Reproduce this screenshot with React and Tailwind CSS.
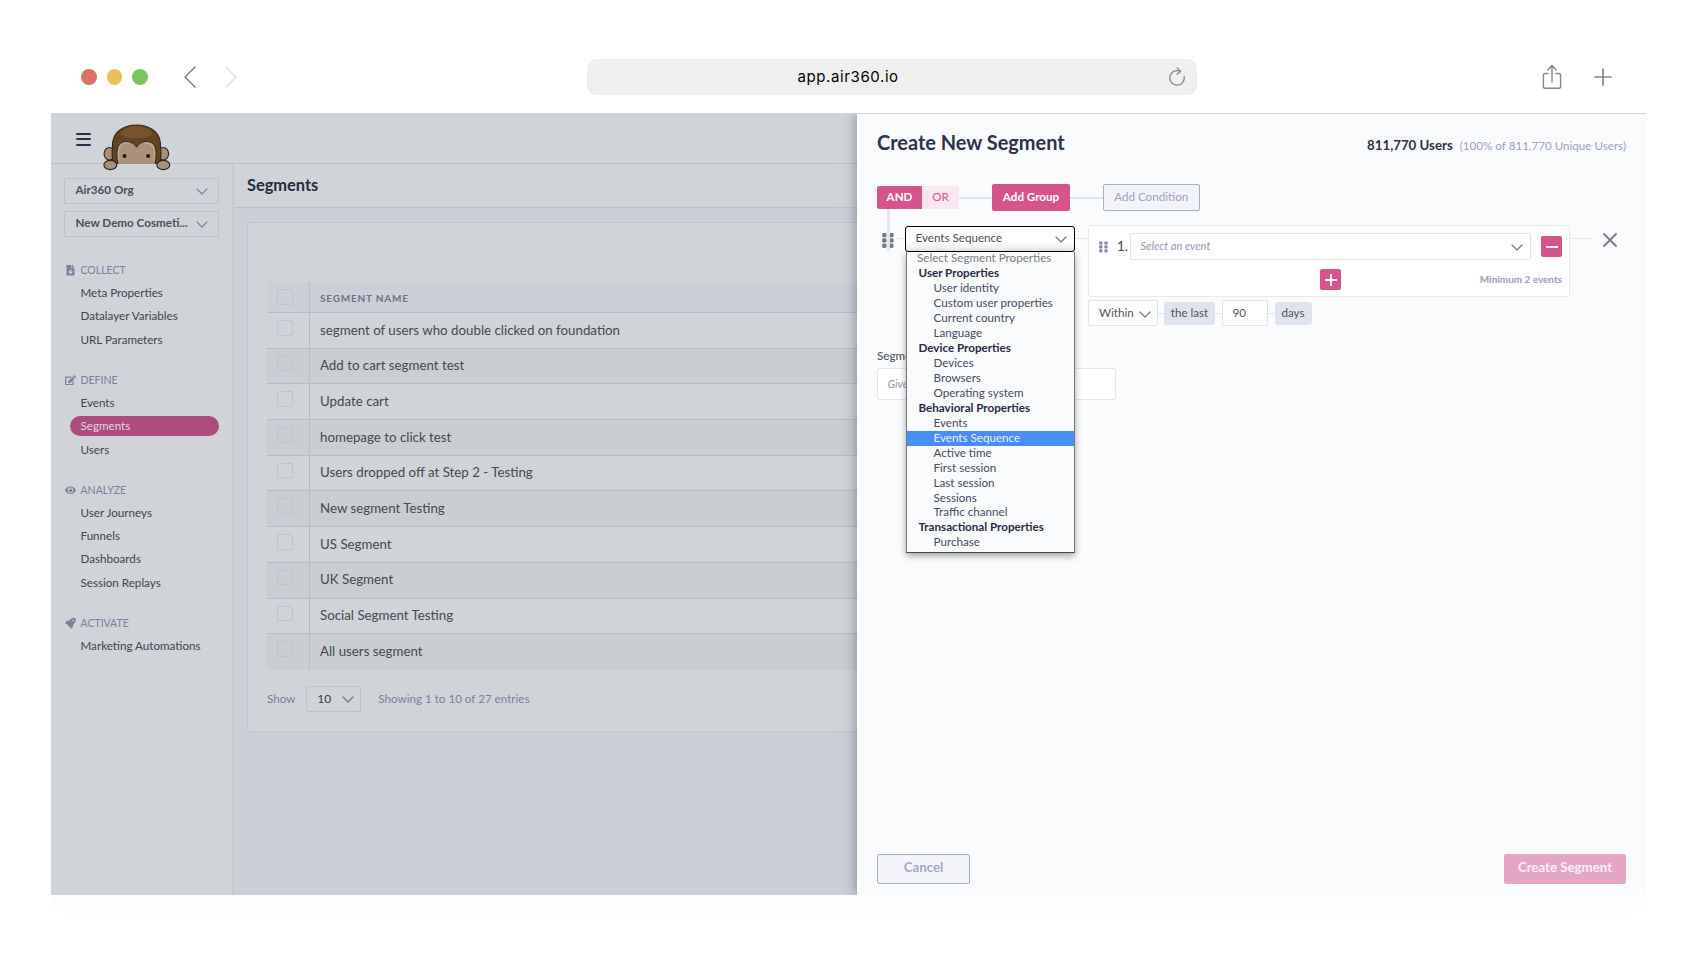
import React from "react";
import { FaFileDownload, FaEdit, FaEye, FaRocket } from "react-icons/fa";

const nav = [
  { title: "COLLECT", Icon: FaFileDownload, items: ["Meta Properties", "Datalayer Variables", "URL Parameters"] },
  { title: "DEFINE", Icon: FaEdit, items: ["Events", "Segments", "Users"] },
  { title: "ANALYZE", Icon: FaEye, items: ["User Journeys", "Funnels", "Dashboards", "Session Replays"] },
  { title: "ACTIVATE", Icon: FaRocket, items: ["Marketing Automations"] },
];

const segments = [
  "segment of users who double clicked on foundation",
  "Add to cart segment test",
  "Update cart",
  "homepage to click test",
  "Users dropped off at Step 2 - Testing",
  "New segment Testing",
  "US Segment",
  "UK Segment",
  "Social Segment Testing",
  "All users segment",
];

const groups = [
  { label: "User Properties", options: ["User identity", "Custom user properties", "Current country", "Language"] },
  { label: "Device Properties", options: ["Devices", "Browsers", "Operating system"] },
  {
    label: "Behavioral Properties",
    options: ["Events", "Events Sequence", "Active time", "First session", "Last session", "Sessions", "Traffic channel"],
  },
  { label: "Transactional Properties", options: ["Purchase"] },
];

function Chevron({ className }) {
  return (
    <svg viewBox="0 0 12 7" className={className} fill="none" stroke="currentColor" strokeWidth="1.2" strokeLinecap="round" strokeLinejoin="round">
      <path d="M1 1l5 5 5-5" />
    </svg>
  );
}

function Grip({ className }) {
  return (
    <svg viewBox="0 0 12 15" className={className} fill="currentColor">
      {[0, 5.3, 10.6].map((y) => (
        <g key={y}>
          <rect x="0.2" y={y} width="4.3" height="4.3" rx="1.3" />
          <rect x="7.2" y={y} width="4.3" height="4.3" rx="1.3" />
        </g>
      ))}
    </svg>
  );
}

function Monkey() {
  return (
    <svg viewBox="190 250 205 142" className="ml-[11.5px] mt-[9.5px] h-[47px] w-[68px] shrink-0" stroke="#2f2520" strokeWidth="3.5" strokeLinejoin="round">
      <ellipse cx="209" cy="340" rx="16" ry="19" fill="#a98f77" />
      <ellipse cx="372" cy="340" rx="16" ry="19" fill="#a98f77" />
      <path d="M219 371C217 350 217 325 219 305C223 273 252 253 291 253C330 253 359 273 363 305C365 325 365 350 363 371Z" fill="#65431f" stroke="none" />
      <path d="M242 278C256 262 272 257 291 257C310 257 326 262 341 278C330 290 312 293 291 293C270 293 252 290 242 278Z" fill="#78532f" stroke="none" />
      <path d="M235 371C230 350 230 330 236 316C246 297 277 297 291 320C305 297 336 297 346 316C352 330 352 350 347 371Z" fill="#ab9178" stroke="none" />
      <path d="M235 371C230 350 230 330 236 316C246 297 277 297 291 320C305 297 336 297 346 316C352 330 352 350 347 371" fill="none" strokeWidth="3" />
      <path d="M239 360C236 342 236 330 240 320C246 310 258 306 268 309M343 360C346 342 346 330 342 320C336 310 324 306 314 309" fill="none" stroke="#bda991" strokeWidth="4" />
      <path d="M219 371C217 350 217 325 219 305C223 273 252 253 291 253C330 253 359 273 363 305C365 325 365 350 363 371" fill="none" />
      <circle cx="255" cy="347" r="6" fill="#211a18" stroke="none" />
      <circle cx="326" cy="347" r="6" fill="#211a18" stroke="none" />
      <ellipse cx="212" cy="374" rx="19.5" ry="14" fill="#a98f77" />
      <ellipse cx="372" cy="374" rx="19.5" ry="14" fill="#a98f77" />
    </svg>
  );
}

function BrowserBar() {
  return (
    <div className="flex h-[113px] items-center pt-[41px]">
      <div className="flex h-[36px] w-full items-center">
        <div className="ml-[30px] flex gap-[10px]">
          <span className="size-[15.5px] rounded-full bg-[#dc7063]" />
          <span className="size-[15.5px] rounded-full bg-[#eac05e]" />
          <span className="size-[15.5px] rounded-full bg-[#78c660]" />
        </div>
        <svg viewBox="0 0 12 22" className="ml-[36px] h-[22px] w-3" fill="none" stroke="#777" strokeWidth="1.4" strokeLinecap="round" strokeLinejoin="round">
          <path d="M11 1L1 11l10 10" />
        </svg>
        <svg viewBox="0 0 12 22" className="ml-[29px] h-[22px] w-3" fill="none" stroke="#ddd" strokeWidth="1.4" strokeLinecap="round" strokeLinejoin="round">
          <path d="M1 1l10 10L1 21" />
        </svg>
        <div className="ml-[350px] flex h-[36px] w-[610px] items-center rounded-[9px] bg-[#efefef]">
          <span className="ml-[211px] w-[110px] font-['Inter',sans-serif] text-[15px] tracking-[0.6px] text-black">app.air360.io</span>
          <svg viewBox="0 0 18 20" className="ml-[260px] h-5 w-[18px]" fill="none" stroke="#888" strokeWidth="1.3" strokeLinecap="round" strokeLinejoin="round">
            <path d="M12 4.2A7.3 7.3 0 1 0 16.2 9.5" />
            <path d="M9.2 1l3.4 3.4-3.6 2.8" />
          </svg>
        </div>
        <svg viewBox="0 0 20 26" className="ml-[345px] h-[26px] w-5" fill="none" stroke="#888" strokeWidth="1.4" strokeLinecap="round" strokeLinejoin="round">
          <path d="M6 9.5H3.2A1.8 1.8 0 0 0 1.4 11.3v11.2a1.8 1.8 0 0 0 1.8 1.8h13.6a1.8 1.8 0 0 0 1.8-1.8V11.3a1.8 1.8 0 0 0-1.8-1.8H14M10 18V1.8M5.8 6L10 1.5 14.2 6" />
        </svg>
        <svg viewBox="0 0 18 18" className="ml-[32px] size-[18px]" stroke="#888" strokeWidth="1.7" strokeLinecap="round">
          <path d="M9 1v16M1 9h16" />
        </svg>
      </div>
    </div>
  );
}

function Sidebar() {
  return (
    <aside className="flex w-[183px] shrink-0 flex-col border-r-2 border-[#c6cbd2] pt-[13.5px]">
      {["Air360 Org", "New Demo Cosmeti..."].map((t) => (
        <div key={t} className="mb-[6.5px] ml-[13px] flex h-[26.5px] w-[155px] items-center justify-between rounded-[2px] border border-[#bcc2ca] pr-[10.5px] pl-[10.5px] text-[11.65px] font-bold text-[#4a505a]">
          <span className="pb-[1.5px]">{t}</span>
          <Chevron className="mt-0.5 h-[7px] w-3 text-[#7c83a0]" />
        </div>
      ))}
      <nav className="mt-[15.5px] flex flex-col gap-[17.6px] text-[11.63px] text-[#41464f]">
        {nav.map(({ title, Icon, items }) => (
          <div key={title}>
            <div className="flex h-[22.5px] items-center pl-[14px] text-[#7980a0]">
              <Icon className="w-[11px] text-[10.5px]" />
              <span className="ml-[4.5px] pt-px text-[10.5px]">{title}</span>
            </div>
            {items.map((it) => (
              <div key={it} className="flex h-[23.3px] items-center pl-[19px]">
                <div className={it === "Segments" ? "flex h-5 w-[149px] items-center rounded-full bg-[#ad4c7e] pb-px pl-[10.5px] text-[#e4d3dd]" : "pb-px pl-[10.5px]"}>{it}</div>
              </div>
            ))}
          </div>
        ))}
      </nav>
    </aside>
  );
}

function Checkbox() {
  return <span className="size-[15.5px] rounded-[2px] border border-[#bfc4cc]" />;
}

function SegmentsPage() {
  return (
    <main className="flex flex-1 flex-col bg-[#cacfd8]">
      <div className="flex h-[44px] shrink-0 items-center border-b border-[#bcc1c9] bg-[#d0d3d7] pl-[13px] text-[16.4px] font-bold text-[#252c42]">Segments</div>
      <div className="mt-[14px] ml-[13px] h-[510px] rounded-[3px] border border-[#bfc5cf] bg-[#d0d3d7] pt-[59px] pl-[19px]">
        <div className="flex h-[31px] border-b border-[#b6bcc6] bg-[#cacfd8]">
          <div className="flex w-[43px] justify-center border-r border-[#b6bcc9] pt-[7px] pr-[6.5px]"><Checkbox /></div>
          <div className="flex items-center pt-[2px] pl-[10px] text-[10px] font-bold tracking-[0.8px] text-[#6b7388]">SEGMENT NAME</div>
        </div>
        {segments.map((s, i) => (
          <div key={s} className={`flex h-[35.7px] ${i < 9 ? "border-b border-[#b8bdc5]" : ""} ${i % 2 ? "bg-[#cacdd1]" : ""}`}>
            <div className="flex w-[43px] justify-center border-r border-[#b6bcc9] pt-[7px] pr-[6.5px]"><Checkbox /></div>
            <div className="flex items-center pt-[0.4px] pl-[10px] text-[13.3px] text-[#444a52]">{s}</div>
          </div>
        ))}
        <div className="mt-[16px] flex items-center text-[11.63px] text-[#7980a0]">
          <span>Show</span>
          <div className="ml-[11px] flex h-[26px] w-[55px] items-center justify-between rounded-[2px] border border-[#bcc2ca] pr-[6px] pl-[10px] text-[#3b404a]">
            <span className="text-[12px]">10</span>
            <Chevron className="mt-[2px] h-[7px] w-3 text-[#6b7280]" />
          </div>
          <span className="ml-[17px]">Showing 1 to 10 of 27 entries</span>
        </div>
      </div>
    </main>
  );
}

function PropertyMenu() {
  return (
    <div className="absolute top-full left-px z-20 w-[168.5px] border-x border-b border-x-[#777] border-b-[#444] bg-[#fafbfd] pb-[1.5px] text-[11.63px] text-[#454b62] shadow-[0_3px_7px_rgba(0,0,0,0.35)]">
      <div className="flex h-[14.96px] items-center pb-[2px] pl-[10px] text-[#7a7d84]">Select Segment Properties</div>
      {groups.map((g) => (
        <div key={g.label}>
          <div className="flex h-[14.96px] items-center pb-[2px] pl-[11.5px] font-bold text-[#262c45]">{g.label}</div>
          {g.options.map((o) => (
            <div key={o} className={`flex h-[14.96px] items-center pb-[2px] pl-[26.5px] ${o === "Events Sequence" ? "bg-[#478ef7] text-[#e6f0ff]" : ""}`}>{o}</div>
          ))}
        </div>
      ))}
    </div>
  );
}

function ConditionRow() {
  return (
    <div className="flex items-start">
      <div className="flex h-[41px] w-[28px] items-start">
        <div className="flex w-[17px] flex-col pl-[5px] pt-[8px]">
          <Grip className="h-[15px] w-3 text-[#737780]" />
        </div>
        <span className="mt-[13px] ml-[2px] h-px w-[9px] bg-[#e2e5ea]" />
      </div>
      <div className="relative mt-[0.5px] w-[169.5px]">
        <div className="flex h-[26px] w-[169.5px] items-center justify-between rounded-[3px] border-[1.5px] border-black bg-gradient-to-b from-white from-60% to-[#e9eaec] pr-[6.5px] pb-[1px] pl-[9.5px] text-[11.63px] text-[#454b62]">
          <span>Events Sequence</span>
          <Chevron className="mt-[3px] h-[7px] w-3 text-[#777]" />
        </div>
        <PropertyMenu />
      </div>
      <span className="mt-[13px] h-px w-[13.5px] bg-[#e2e5ea]" />
      <div className="flex flex-col">
        <div className="flex h-[72px] w-[482px] flex-col rounded-[3px] border border-[#e6e9ed] bg-white pt-[7px] pl-[10px]">
          <div className="flex h-[27px] items-center">
            <Grip className="h-[12px] w-[9px] text-[#8188ab]" />
            <span className="ml-[9px] w-[13px] text-[13.3px] text-[#444a52]">1.</span>
            <div className="flex h-[27px] w-[401px] items-center justify-between rounded-[2px] border border-[#dfe3e8] pr-[7px] pb-[1px] pl-[9.5px] text-[11.1px] text-[#8f95b4] italic">
              <span>Select an event</span>
              <Chevron className="mt-[3px] h-[7px] w-3 text-[#777]" />
            </div>
            <div className="ml-[10px] flex size-[21px] items-center justify-center rounded-[2px] bg-[#d5548c]">
              <span className="h-[2px] w-3 bg-white" />
            </div>
          </div>
          <div className="mt-[9px] flex h-[21px] items-center">
            <div className="ml-[221px] flex size-[21px] items-center justify-center rounded-[2px] bg-[#d5548c]">
              <svg viewBox="0 0 12 12" className="size-3" stroke="white" strokeWidth="1.8"><path d="M6 0v12M0 6h12" /></svg>
            </div>
            <span className="ml-auto pr-[7px] text-[9.97px] font-bold text-[#989dbb]">Minimum 2 events</span>
          </div>
        </div>
        <div className="mt-[3px] flex items-center text-[11.63px] text-[#50555f]">
          <div className="flex h-[26px] w-[69.5px] items-center justify-between rounded-[2px] border border-[#dfe3e8] bg-white pr-[6px] pb-px pl-[10px]">
            <span>Within</span>
            <Chevron className="mt-[3px] h-[7px] w-3 text-[#777]" />
          </div>
          <span className="h-px w-[6.5px] bg-[#e2e5ea]" />
          <div className="flex h-[23px] w-[51px] items-center justify-center rounded-[3px] bg-[#dfe3eb] pb-px">the last</div>
          <span className="h-px w-[6.5px] bg-[#e2e5ea]" />
          <div className="flex h-[26px] w-[46px] items-center rounded-[2px] border border-[#dfe3e8] bg-white pb-px pl-[10px]">90</div>
          <span className="h-px w-[7px] bg-[#e2e5ea]" />
          <div className="flex h-[23px] w-[37px] items-center justify-center rounded-[3px] bg-[#dfe3eb] pb-px">days</div>
        </div>
      </div>
      <span className="mt-[13px] h-px w-[23px] bg-[#e2e5ea]" />
      <svg viewBox="0 0 14 14" className="mt-[8px] ml-[9.5px] size-[14px]" stroke="#777b82" strokeWidth="1.8" strokeLinecap="round">
        <path d="M1 1l12 12M13 1L1 13" />
      </svg>
    </div>
  );
}

function CreateSegmentPanel() {
  return (
    <section className="absolute inset-y-0 right-0 z-10 flex w-[789px] flex-col bg-[#fafbfd] px-5 pb-[11.5px] shadow-[0_0_12px_rgba(40,50,70,0.5)]">
      <div className="flex h-[58px] items-center justify-between">
        <h1 className="text-[19.95px] font-bold text-[#2c334b]">Create New Segment</h1>
        <div className="flex items-baseline pt-[6px]">
          <span className="text-[13.25px] font-bold text-[#2c334b]">811,770 Users</span>
          <span className="ml-[7px] text-[11.63px] text-[#9ca2c0]">(100% of 811,770 Unique Users)</span>
        </div>
      </div>
      <div className="mt-[12px] flex h-[27px] items-center text-[11.63px] font-bold">
        <div className="relative flex h-[23px]">
          <span className="flex w-[45px] items-center justify-center rounded-l-[2px] bg-[#d5548c] pb-px text-white">AND</span>
          <span className="flex w-[37px] items-center justify-center rounded-r-[2px] bg-[#f9e6ef] pb-px font-normal text-[#d5548c]">OR</span>
          <span className="absolute top-full left-[10px] h-[42px] w-[3px] rounded-b bg-[#e3e7ed]" />
        </div>
        <span className="h-[2px] w-[33px] bg-[#dfe4ea]" />
        <span className="flex h-[27px] w-[78px] items-center justify-center rounded-[2px] bg-[#d5548c] pb-px text-white">Add Group</span>
        <span className="h-[2px] w-[33px] bg-[#dfe4ea]" />
        <span className="flex h-[27px] w-[96.5px] items-center justify-center rounded-[2px] border border-[#a8acc8] bg-[#f3f4fa] pb-px font-normal text-[#9b9fc0]">Add Condition</span>
      </div>
      <div className="mt-[14px]">
        <ConditionRow />
      </div>
      <label className="mt-[21px] text-[11.63px] font-medium text-[#50555f]">Segment name</label>
      <div className="mt-[4px] flex h-[32px] w-[239px] items-center rounded-[2px] border border-[#e2e5ea] bg-white pl-[9.5px] text-[11.1px] text-[#8f95b4] italic">Give your segment a name</div>
      <div className="mt-auto flex justify-between text-[13.25px] font-bold">
        <button className="flex h-[30px] w-[93px] items-center justify-center rounded-[2px] border border-[#a8acc8] bg-[#f4f5fa] pb-px text-[#a3a7c6]">Cancel</button>
        <button className="flex h-[30px] w-[122px] items-center justify-center rounded-[2px] bg-[#e5a6c5] pb-px text-[#fbeef5]">Create Segment</button>
      </div>
    </section>
  );
}

export default function App() {
  return (
    <div className="h-[955px] w-[1697px] overflow-hidden bg-white px-[51px] font-['Lato','Carlito',sans-serif]">
      <BrowserBar />
      <div className="relative flex h-[782px] flex-col overflow-hidden border-t border-[#d3d6d9] bg-[#d0d3d7]">
        <header className="flex h-[50px] shrink-0 items-start border-b border-[#bcc1c9]">
          <div className="mt-[18.5px] ml-[25px] flex w-[15px] flex-col gap-[3.5px]">
            <span className="h-[2px] rounded bg-[#2a3150]" />
            <span className="h-[2px] rounded bg-[#2a3150]" />
            <span className="h-[2px] rounded bg-[#2a3150]" />
          </div>
          <Monkey />
        </header>
        <div className="flex flex-1">
          <Sidebar />
          <SegmentsPage />
        </div>
        <CreateSegmentPanel />
      </div>
      <div className="h-[18px] rounded-b-[10px] bg-[#fdfdfd]" />
    </div>
  );
}
